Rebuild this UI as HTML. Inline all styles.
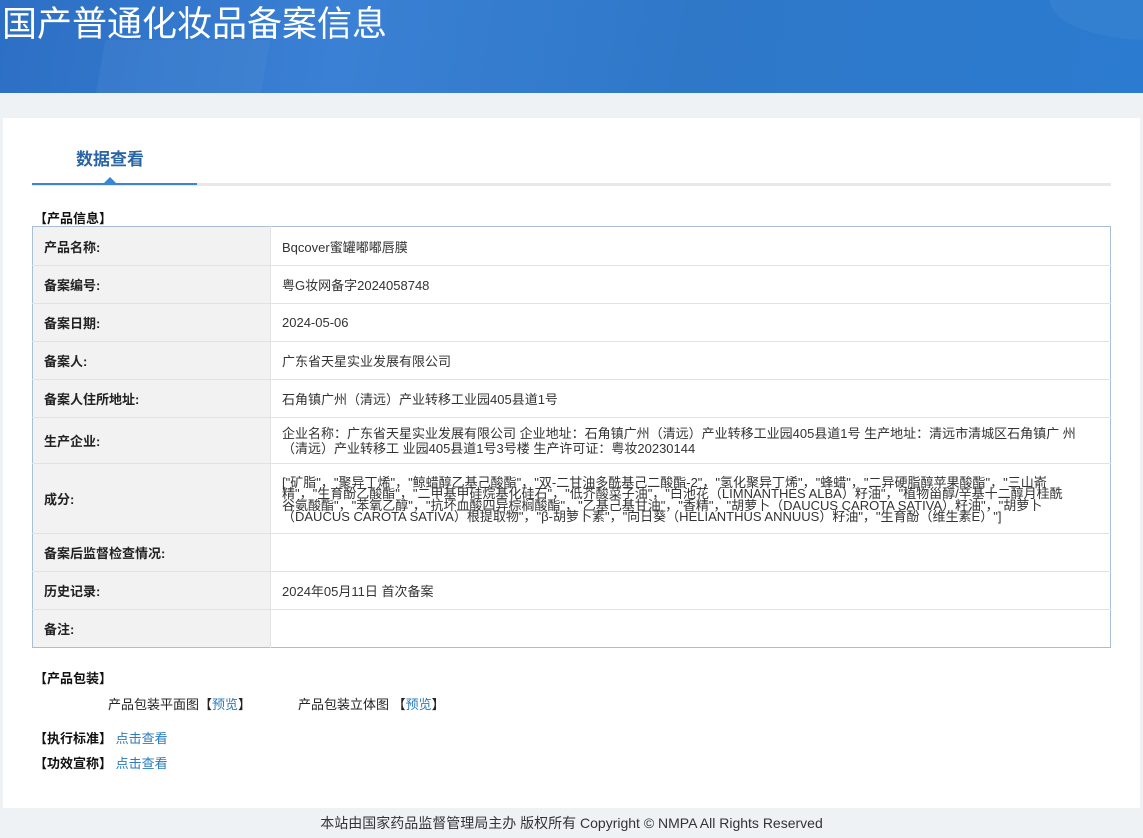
<!DOCTYPE html>
<html><head><meta charset="utf-8"><style>
*{margin:0;padding:0;box-sizing:border-box}
body{width:1143px;height:836px;overflow:hidden;background:#eef2f5;font-family:"Liberation Sans","Noto Sans CJK SC",sans-serif;font-size:13px;color:#333;position:relative}
.hdr{position:absolute;left:0;top:0;width:1143px;height:93px;background:linear-gradient(100deg,#2c6fc4 0%,#3a80d4 30%,#2f78c8 60%,#2b7bd0 100%);overflow:hidden}
.hdr h1{position:absolute;left:2px;top:2px;font-size:35px;font-weight:normal;color:#fff;font-family:"Noto Sans CJK SC",sans-serif;line-height:40px}
.panel{position:absolute;left:3px;top:118px;width:1137px;height:690px;background:#fff}
.tab{position:absolute;left:76px;top:145px;font-size:17px;font-weight:bold;color:#2a64a4}
.line{position:absolute;left:32px;top:183px;width:1079px;height:3px;background:#e8e8e8}
.line b{position:absolute;left:0;top:0;width:165px;height:2px;background:#3a86d4}
.tri{position:absolute;left:103px;top:177px;width:0;height:0;border-left:7px solid transparent;border-right:7px solid transparent;border-bottom:7px solid #3a86d4}
.sec{position:absolute;left:34px;font-weight:bold;color:#111;font-size:13px}
table{position:absolute;left:32px;top:226px;width:1079px;border-collapse:collapse;border:1px solid #a9bdd3}
td{border-bottom:1px solid #e2e2e2;vertical-align:middle;font-size:13px}
td.l{width:238px;background:#f2f2f2;font-weight:bold;padding-left:11px;color:#222;border-right:1px solid #e2e2e2}
td.v{padding-left:11px;color:#333}
.ing{line-height:11.5px;font-size:13px;padding-top:2px;padding-right:40px}
a{color:#2a7bbd;text-decoration:none}
.t{position:absolute;font-size:13px;color:#222}
.ft{position:absolute;left:0;top:808px;width:1143px;height:28px;text-align:center;line-height:30px;font-size:14px;color:#333}
</style></head><body>
<div class="hdr">
<div style="position:absolute;left:100px;top:40px;width:165px;height:60px;background:rgba(255,255,255,0.04);transform:skewX(-10deg)"></div>
<div style="position:absolute;left:1050px;top:-40px;width:200px;height:80px;border-radius:50%;background:rgba(255,255,255,0.04)"></div>
<h1>国产普通化妆品备案信息</h1></div>
<div class="panel"></div>
<div class="tab">数据查看</div>
<div class="line"><b></b></div>
<div class="tri"></div>
<div class="sec" style="top:208px">【产品信息】</div>
<table>
<tr style="height:39px"><td class="l">产品名称:</td><td class="v">Bqcover蜜罐嘟嘟唇膜</td></tr>
<tr style="height:38px"><td class="l">备案编号:</td><td class="v">粤G妆网备字2024058748</td></tr>
<tr style="height:38px"><td class="l">备案日期:</td><td class="v">2024-05-06</td></tr>
<tr style="height:38px"><td class="l">备案人:</td><td class="v">广东省天星实业发展有限公司</td></tr>
<tr style="height:38px"><td class="l">备案人住所地址:</td><td class="v">石角镇广州（清远）产业转移工业园405县道1号</td></tr>
<tr style="height:46px"><td class="l">生产企业:</td><td class="v" style="line-height:15px;font-size:13px;padding-right:25px">企业名称：广东省天星实业发展有限公司 企业地址：石角镇广州（清远）产业转移工业园405县道1号 生产地址：清远市清城区石角镇广 州（清远）产业转移工 业园405县道1号3号楼 生产许可证：粤妆20230144</td></tr>
<tr style="height:70px"><td class="l">成分:</td><td class="v ing">["矿脂"，"聚异丁烯"，"鲸蜡醇乙基己酸酯"，"双-二甘油多酰基己二酸酯-2"，"氢化聚异丁烯"，"蜂蜡"，"二异硬脂醇苹果酸酯"，"三山嵛精"，"生育酚乙酸酯"，"二甲基甲硅烷基化硅石"，"低芥酸菜子油"，"白池花（LIMNANTHES ALBA）籽油"，"植物甾醇/辛基十二醇月桂酰谷氨酸酯"，"苯氧乙醇"，"抗坏血酸四异棕榈酸酯"，"乙基己基甘油"，"香精"，"胡萝卜（DAUCUS CAROTA SATIVA）籽油"，"胡萝卜（DAUCUS CAROTA SATIVA）根提取物"，"β-胡萝卜素"，"向日葵（HELIANTHUS ANNUUS）籽油"，"生育酚（维生素E）"]</td></tr>
<tr style="height:38px"><td class="l">备案后监督检查情况:</td><td class="v"></td></tr>
<tr style="height:38px"><td class="l">历史记录:</td><td class="v">2024年05月11日 首次备案</td></tr>
<tr style="height:38px"><td class="l" style="border-bottom:none">备注:</td><td class="v" style="border-bottom:none"></td></tr>
</table>
<div class="sec" style="top:668px">【产品包装】</div>
<div class="t" style="left:108px;top:694px">产品包装平面图【<a>预览</a>】</div>
<div class="t" style="left:298px;top:694px">产品包装立体图 【<a>预览</a>】</div>
<div class="sec" style="top:728px">【执行标准】 <a style="font-weight:normal">点击查看</a></div>
<div class="sec" style="top:753px">【功效宣称】 <a style="font-weight:normal">点击查看</a></div>
<div class="ft">本站由国家药品监督管理局主办 版权所有 Copyright © NMPA All Rights Reserved</div>
</body></html>
